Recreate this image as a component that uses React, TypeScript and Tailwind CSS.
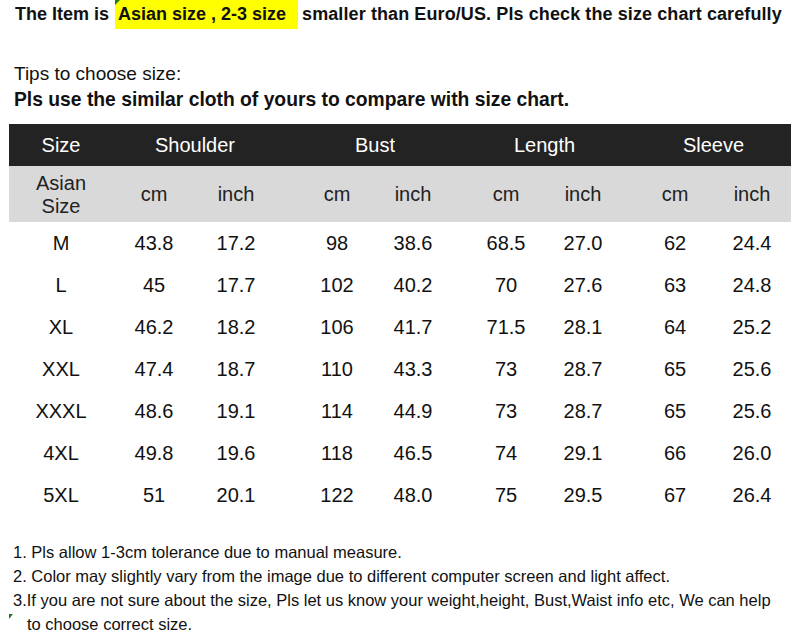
import React from "react";

const rows: string[][] = [
  ["M", "43.8", "17.2", "98", "38.6", "68.5", "27.0", "62", "24.4"],
  ["L", "45", "17.7", "102", "40.2", "70", "27.6", "63", "24.8"],
  ["XL", "46.2", "18.2", "106", "41.7", "71.5", "28.1", "64", "25.2"],
  ["XXL", "47.4", "18.7", "110", "43.3", "73", "28.7", "65", "25.6"],
  ["XXXL", "48.6", "19.1", "114", "44.9", "73", "28.7", "65", "25.6"],
  ["4XL", "49.8", "19.6", "118", "46.5", "74", "29.1", "66", "26.0"],
  ["5XL", "51", "20.1", "122", "48.0", "75", "29.5", "67", "26.4"],
];

const margins = [
  "ml-[22px]",
  "ml-[33px]",
  "ml-[22px]",
  "ml-[41px]",
  "ml-[16px]",
  "ml-[33px]",
  "ml-[17px]",
  "ml-[32px]",
  "ml-[17px]",
];

function Cell({ i, children }: { i: number; children: React.ReactNode }) {
  return (
    <div className={`${margins[i]} w-[60px] shrink-0 text-center whitespace-nowrap`}>
      {children}
    </div>
  );
}

export default function App() {
  return (
    <div
      className="w-[800px] h-[642px] bg-white text-[#111] overflow-hidden"
      style={{ fontFamily: '"Liberation Sans", Arial, sans-serif' }}
    >
      {/* Top line */}
      <div className="h-[29px] flex items-center pl-[15px] font-bold text-[18px] whitespace-nowrap">
        <span>The Item is</span>
        <span className="relative ml-[6px] h-[29px] w-[183px] bg-[#ffff00] flex items-center pl-[3px]">
          <span className="absolute left-0 top-0 w-0 h-0 border-t-[5px] border-t-[#1f7a1f] border-r-[5px] border-r-transparent" />
          Asian size , 2-3 size
        </span>
        <span className="ml-[4px] tracking-[0.1px]">smaller than Euro/US. Pls check the size chart carefully</span>
      </div>

      {/* Tips */}
      <div className="mt-[32px] pl-[14px] text-[19px] leading-[26px] whitespace-nowrap">
        Tips to choose size:
      </div>
      <div className="pl-[14px] text-[19.3px] leading-[26px] font-bold whitespace-nowrap">
        Pls use the similar cloth of yours to compare with size chart.
      </div>

      {/* Table */}
      <div className="mt-[11px] ml-[9px] w-[782px] text-[20px]">
        <div className="h-[42px] bg-[#232323] text-white flex items-center whitespace-nowrap">
          <div className="ml-[22px] w-[60px] text-center">Size</div>
          <div className="ml-[33px] w-[142px] text-center">Shoulder</div>
          <div className="ml-[41px] w-[136px] text-center">Bust</div>
          <div className="ml-[33px] w-[137px] text-center">Length</div>
          <div className="ml-[32px] w-[137px] text-center">Sleeve</div>
        </div>
        <div className="h-[56px] bg-[#d9d9d9] text-[#222] flex items-center">
          <Cell i={0}>
            <div className="leading-[23px] pt-[2px]">
              Asian
              <br />
              Size
            </div>
          </Cell>
          {["cm", "inch", "cm", "inch", "cm", "inch", "cm", "inch"].map((t, k) => (
            <Cell key={k} i={k + 1}>
              {t}
            </Cell>
          ))}
        </div>
        {rows.map((r, ri) => (
          <div key={ri} className="h-[42px] flex items-center">
            {r.map((v, ci) => (
              <Cell key={ci} i={ci}>
                {v}
              </Cell>
            ))}
          </div>
        ))}
      </div>

      {/* Notes */}
      <div className="relative mt-[24px] text-[16.5px] leading-[24px] text-[#111] whitespace-nowrap">
        <div className="pl-[13px]">1. Pls allow 1-3cm tolerance due to manual measure.</div>
        <div className="pl-[13px]">2. Color may slightly vary from the image due to different computer screen and light affect.</div>
        <div className="pl-[13px]">
          3.If you are not sure about the size, Pls let us know your weight,height, Bust,Waist info etc, We can help
        </div>
        <div className="pl-[27px]">to choose correct size.</div>
        <span className="absolute left-[9px] top-[74px] w-0 h-0 border-t-[5px] border-t-[#1f7a1f] border-r-[4px] border-r-transparent" />
      </div>
    </div>
  );
}
